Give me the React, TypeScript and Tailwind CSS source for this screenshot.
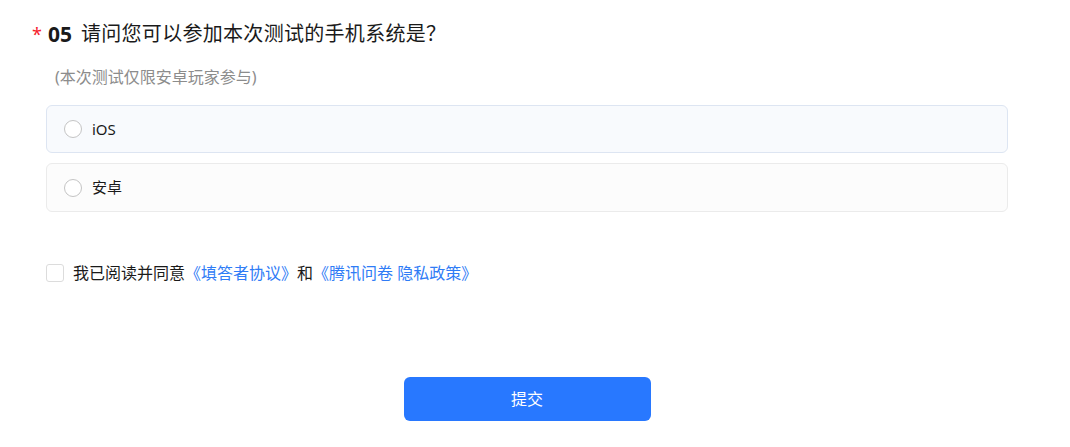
import { useState } from 'react';

const font = { fontFamily: '"Noto Sans", "Noto Sans CJK SC", sans-serif' };

const options = ['iOS', '安卓'];

export default function App() {
  const [selected, setSelected] = useState<number | null>(null);
  const [agreed, setAgreed] = useState(false);

  return (
    <div className="min-h-screen bg-white" style={font}>
      <div className="w-[1008px] pl-[32px] pt-[22px]">
        {/* Question title */}
        <div className="flex items-center h-[24px] text-[20px] leading-[24px] text-[#1a1a1a]">
          <span className="text-[#f5222d] text-[18px] mr-[6px]">*</span>
          <span className="font-bold text-[21px] mr-[9px]">05</span>
          <span className="tracking-[0.3px]">请问您可以参加本次测试的手机系统是？</span>
        </div>

        <div className="pl-[14px]">
          <div className="mt-[20px] h-[22px] text-[16px] leading-[22px] text-[#8c8c8c] pl-[9px]">
            (本次测试仅限安卓玩家参与)
          </div>

          {/* Options */}
          <div className="mt-[17px] flex flex-col gap-[10px]">
            {options.map((opt, i) => (
              <label
                key={opt}
                onClick={() => setSelected(i)}
                className={`flex items-center px-[17px] rounded-[6px] border cursor-pointer ${
                  i === 0 ? 'h-[48px] border-[#dde5f2] bg-[#f8fafd]' : 'h-[49px] border-[#ebebeb] bg-[#fcfcfc]'
                }`}
              >
                <span className="w-[18px] h-[18px] rounded-full border border-[#c4c4c4] bg-white flex items-center justify-center">
                  {selected === i && <span className="w-[8px] h-[8px] rounded-full bg-[#2878ff]" />}
                </span>
                <span className="ml-[10px] text-[15px] text-[#1a1a1a]">{opt}</span>
              </label>
            ))}
          </div>

          {/* Agreement */}
          <div className="mt-[51px] flex items-center h-[20px] text-[16px] text-[#1a1a1a]">
            <span
              onClick={() => setAgreed(!agreed)}
              className="w-[18px] h-[18px] rounded-[3px] border border-[#dcdcdc] bg-white mr-[9px] cursor-pointer"
            />
            <span>我已阅读并同意</span>
            <span className="text-[#2f7cf6]">《填答者协议》</span>
            <span>和</span>
            <span className="text-[#2f7cf6]">《腾讯问卷 隐私政策》</span>
          </div>

          {/* Submit */}
          <div className="mt-[94px] flex justify-center">
            <button className="w-[247px] h-[44px] rounded-[6px] bg-[#2878ff] text-white text-[16px]">
              提交
            </button>
          </div>
        </div>
      </div>
    </div>
  );
}
